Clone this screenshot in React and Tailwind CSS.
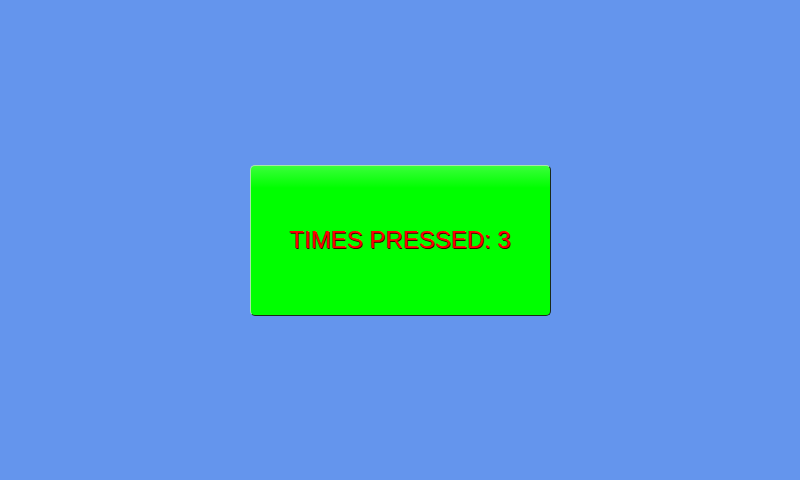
import React, { useState } from "react";

export default function App() {
  const [count, setCount] = useState(3);

  return (
    <div className="w-[800px] h-[480px] bg-[#6495ed] flex items-center justify-center">
      <button
        onClick={() => setCount(count + 1)}
        className="w-[301px] h-[151px] rounded-[5px] border border-t-[#a8e8a8] border-l-[#a8e8a8] border-r-[#1a2a1a] border-b-[#1a2a1a] bg-[linear-gradient(to_bottom,#3aff3a_0px,#00ff00_22px,#00ff00_100%)] flex items-center justify-center"
      >
        <span
          className="text-[24px] text-[#ff0000] [text-shadow:1px_1px_0_#400000]"
          style={{ fontFamily: '"Liberation Sans", Arial, sans-serif' }}
        >
          TIMES PRESSED: {count}
        </span>
      </button>
    </div>
  );
}
